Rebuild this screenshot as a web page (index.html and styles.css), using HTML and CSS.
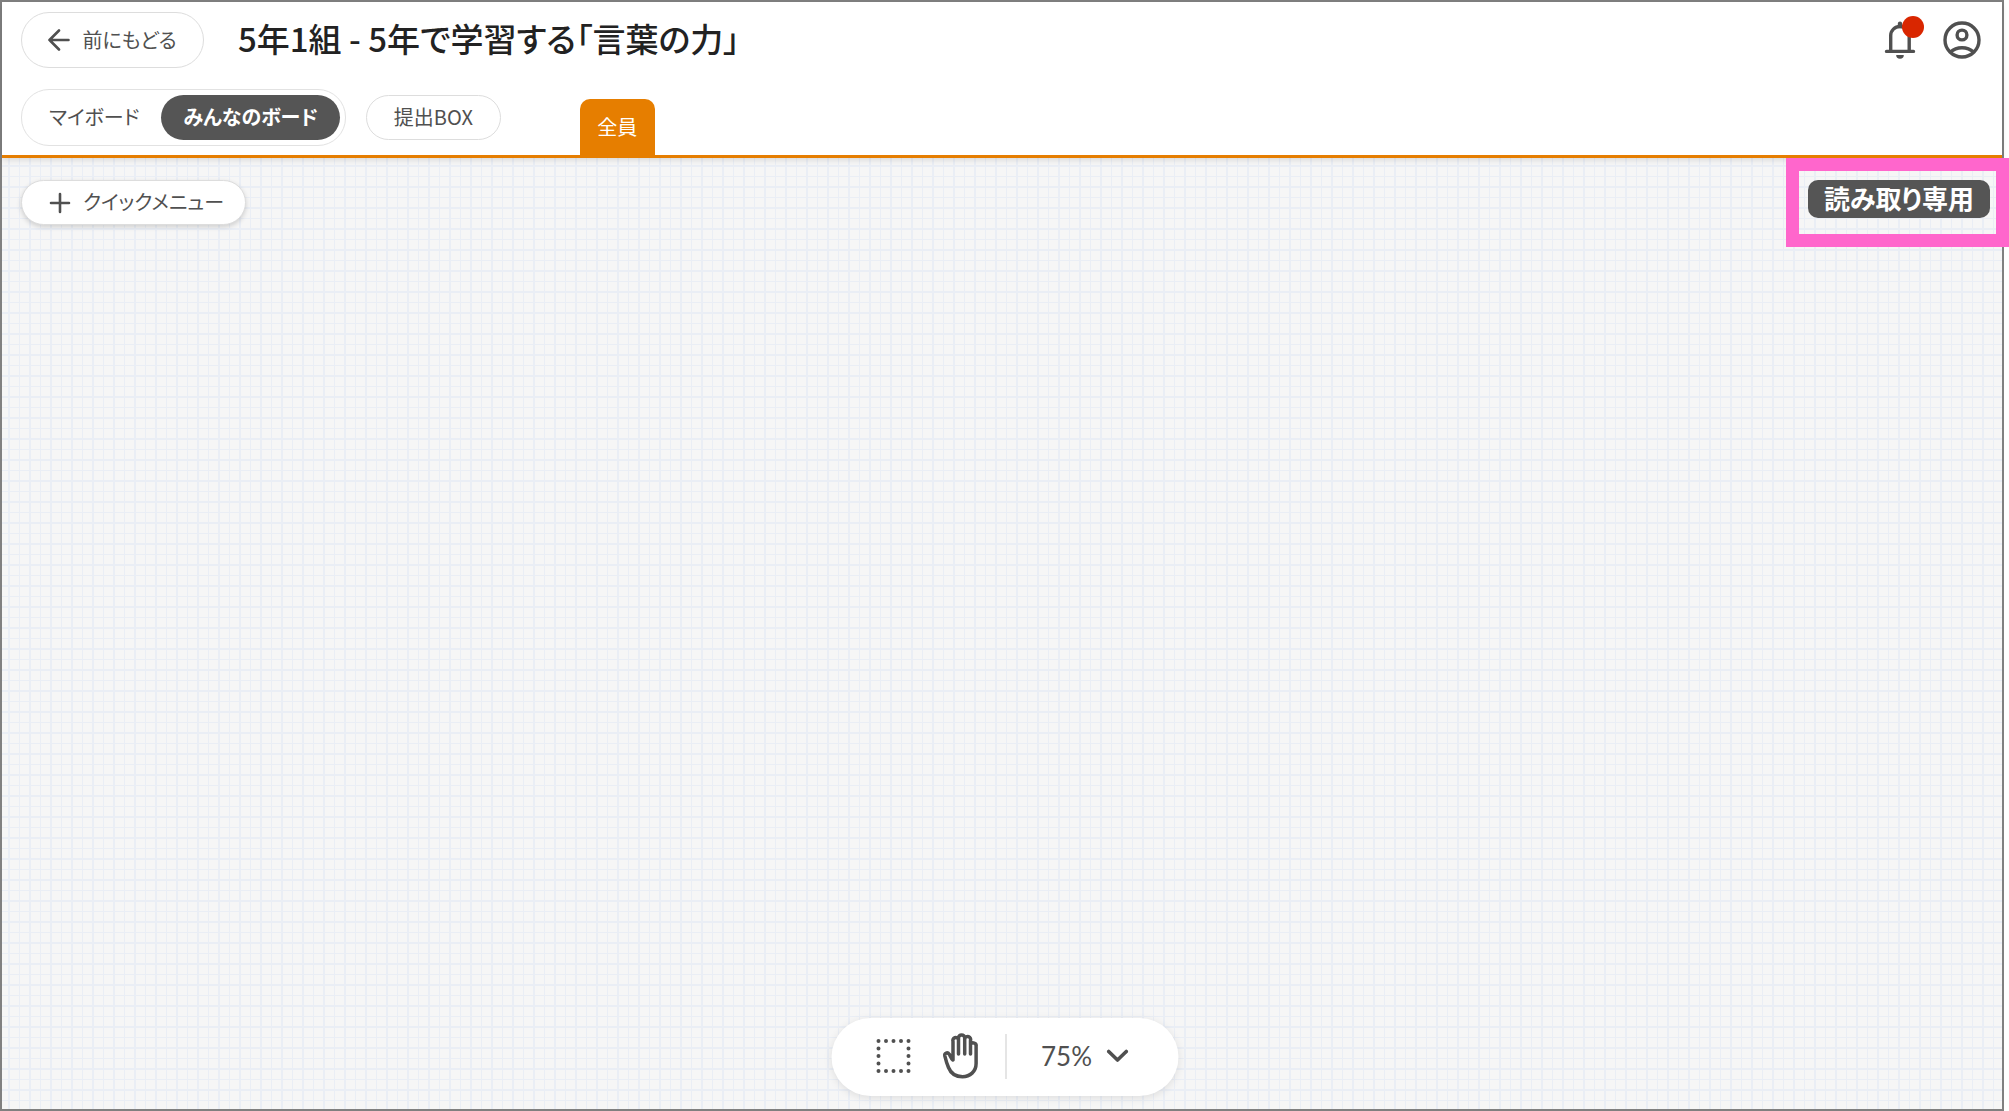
FILE: index.html
```html
<!DOCTYPE html>
<html lang="ja">
<head>
<meta charset="utf-8">
<meta name="viewport" content="width=device-width, initial-scale=1">
<title>5年1組 - 5年で学習する「言葉の力」</title>
<link rel="stylesheet" href="styles.css">
</head>
<body>
<div class="app">
  <header class="header">
    <div class="title-row">
      <button class="pill pill-back" type="button">
        <svg class="icon" width="22" height="22" viewBox="0 0 22 22" fill="none" stroke="currentColor" stroke-width="2.6" stroke-linecap="round" stroke-linejoin="round" aria-hidden="true"><path d="M20.5 11H1.5M11 1.500L1.500 11L11 20.500"/></svg>
        <span class="label">前にもどる</span>
      </button>
      <h1 class="title">5年1組 - 5年で学習する「言葉の力」</h1>
      <div class="account">
        <button class="icon-button" type="button" aria-label="お知らせ">
          <svg width="32" height="38" viewBox="0 0 32 38" fill="none" stroke="currentColor" stroke-width="3.4" stroke-linecap="round" aria-hidden="true">
            <path d="M6.700 30V14.500A9.200 9 0 0 1 25.200 14.500V30M2.500 30.400H29.500"/>
            <path d="M16 2.800V5" stroke-width="4.400"/>
            <path d="M12.200 34H19.800A3.800 3.800 0 0 1 12.200 34Z" fill="currentColor" stroke="none"/>
          </svg>
          <span class="unread"></span>
        </button>
        <button class="icon-button" type="button" aria-label="アカウント">
          <svg width="38" height="38" viewBox="0 0 38 38" fill="none" stroke="currentColor" stroke-width="3.400" aria-hidden="true">
            <circle cx="19" cy="19" r="17"/>
            <circle cx="19" cy="14" r="4.900"/>
            <path d="M7.500 31C13.500 25.300 24.500 25.300 30.500 31"/>
          </svg>
        </button>
      </div>
    </div>
    <nav class="board-row">
      <div class="switch">
        <button class="switch-item" type="button">マイボード</button>
        <button class="switch-item is-active" type="button">みんなのボード</button>
      </div>
      <button class="pill pill-submit" type="button"><span class="label">提出BOX</span></button>
      <button class="tab" type="button">全員</button>
    </nav>
  </header>
  <main class="canvas">
    <button class="pill quick-menu" type="button">
      <svg class="icon" width="22" height="22" viewBox="0 0 22 22" fill="none" stroke="currentColor" stroke-width="2.600" stroke-linecap="round" aria-hidden="true"><path d="M11 2V20M2 11H20"/></svg>
      <span class="label">クイックメニュー</span>
    </button>
    <span class="readonly">読み取り専用</span>
  </main>
</div>
<div class="callout"></div>
<div class="toolbar">
  <button class="icon-button" type="button" aria-label="範囲選択">
    <svg width="36" height="36" viewBox="0 0 36 36" fill="none" stroke="currentColor" stroke-width="4" stroke-linecap="round" stroke-dasharray="0 7.500" aria-hidden="true"><rect x="3" y="3" width="30" height="30"/></svg>
  </button>
  <button class="icon-button" type="button" aria-label="手のひら">
    <svg width="36" height="46" viewBox="0 0 36 46" fill="none" stroke="currentColor" stroke-width="3.500" stroke-linecap="round" stroke-linejoin="round" aria-hidden="true">
      <path d="M16 21V5A3.100 3.100 0 0 1 22.200 5V21M22.200 5.500A3 3 0 0 1 28 7.500V21M28 11.500A3 3 0 0 1 33.600 13.500V30.500C33.600 38.500 27.500 43.700 20 43.700C12.500 43.700 8 39.500 6 34.500C4.300 30.500 3.200 26.500 2.300 22.800C1.800 20 5 18.800 6.800 21.200C7.800 23 8.500 25.500 10.500 27V8.500A2.900 2.900 0 0 1 16 6.500"/>
    </svg>
  </button>
  <span class="divider"></span>
  <button class="zoom" type="button">
    <span>75%</span>
    <svg width="22" height="14" viewBox="0 0 22 14" fill="none" stroke="currentColor" stroke-width="3.600" stroke-linecap="round" stroke-linejoin="round" aria-hidden="true"><path d="M2.200 2.500L11 11L19.800 2.500"/></svg>
  </button>
</div>
</body>
</html>
```
FILE: styles.css
```css
* {
  box-sizing: border-box;
}

body {
  position: relative;
  display: flex;
  min-height: 100vh;
  margin: 0;
  padding-right: 5px;
  background: #fff;
  color: #505050;
  font-family: "Noto Sans CJK JP", "Noto Sans", sans-serif;
  font-size: 20px;
  font-feature-settings: "palt";
}

button {
  margin: 0;
  padding: 0;
  border: 0;
  background: none;
  color: inherit;
  font: inherit;
  font-feature-settings: inherit;
  cursor: pointer;
}

svg {
  display: block;
}

.app {
  flex: 1;
  display: flex;
  flex-direction: column;
  border: 2px solid #808080;
}

.header {
  position: relative;
  display: flex;
  flex-direction: column;
  gap: 21px;
  padding: 10px 21px 0 19px;
  border-bottom: 3px solid #e67e00;
  background: #fff;
  box-shadow: 0 2px 6px rgba(0, 0, 0, 0.12);
}

.title-row {
  display: flex;
  align-items: center;
  height: 56px;
}

.pill {
  display: flex;
  align-items: center;
  justify-content: center;
  gap: 12px;
  height: 45px;
  border: 1px solid #ddd;
  border-radius: 28px;
  background: #fff;
}

.label {
  padding-bottom: 2px;
}

.pill-back {
  width: 183px;
  height: 56px;
}

.title {
  margin: 0 0 0 34px;
  padding-bottom: 4px;
  color: #222;
  font-size: 33px;
  font-weight: 500;
  line-height: 44px;
}

.account {
  display: flex;
  gap: 27px;
  margin-left: auto;
}

.icon-button {
  position: relative;
}

.unread {
  position: absolute;
  top: -5px;
  right: -8px;
  width: 22px;
  height: 22px;
  border-radius: 50%;
  background: #d92600;
}

.board-row {
  display: flex;
  height: 66px;
}

.switch {
  display: flex;
  height: 57px;
  padding: 5px;
  border: 1px solid #e2e2e2;
  border-radius: 28px;
}

.switch-item {
  height: 45px;
  padding: 0 22px 2px;
  border-radius: 23px;
}

.switch-item.is-active {
  background: #555;
  color: #fff;
  font-weight: 700;
}

.pill-submit {
  width: 135px;
  margin: 6px 79px 0 20px;
}

.tab {
  align-self: flex-end;
  width: 75px;
  height: 56px;
  padding-bottom: 2px;
  border-radius: 10px 10px 0 0;
  background: #e67e00;
  color: #fff;
}

.canvas {
  flex: 1;
  display: flex;
  align-items: flex-start;
  justify-content: space-between;
  padding: 22px 12px 22px 19px;
  background-color: #f6f6f6;
  background-image:
    linear-gradient(90deg, #eaeef5 2px, transparent 2px, transparent 11px, #eaeef5 11px, #eaeef5 12px, transparent 12px),
    linear-gradient(#eaeef5 2px, transparent 2px, transparent 11px, #eaeef5 11px, #eaeef5 12px, transparent 12px);
  background-position: 6px 7px;
  background-size: 21px 21px;
}

.quick-menu {
  width: 225px;
  padding-left: 6px;
  box-shadow: 0 2px 5px rgba(0, 0, 0, 0.16);
}

.readonly {
  padding: 0 16px 2px;
  border-radius: 10px;
  background: #555;
  color: #fff;
  font-size: 26px;
  font-weight: 700;
  line-height: 36px;
}

.callout {
  position: absolute;
  top: 158px;
  right: 0;
  width: 223px;
  height: 89px;
  border: 13px solid #ff66cc;
}

.toolbar {
  position: absolute;
  bottom: 15px;
  left: 50%;
  display: flex;
  align-items: center;
  width: 347px;
  height: 78px;
  padding: 0 50px 2px 44px;
  border-radius: 39px;
  background: #fff;
  box-shadow: 0 2px 8px rgba(0, 0, 0, 0.1);
  transform: translateX(-50%);
}

.toolbar .icon-button {
  margin-right: 31px;
}

.divider {
  width: 1px;
  height: 45px;
  margin-left: -4px;
  background: #ccc;
}

.zoom {
  display: flex;
  align-items: center;
  justify-content: space-between;
  flex: 1;
  margin-left: 35px;
  font-family: Lato, sans-serif;
  font-size: 26px;
  line-height: 30px;
}
```
